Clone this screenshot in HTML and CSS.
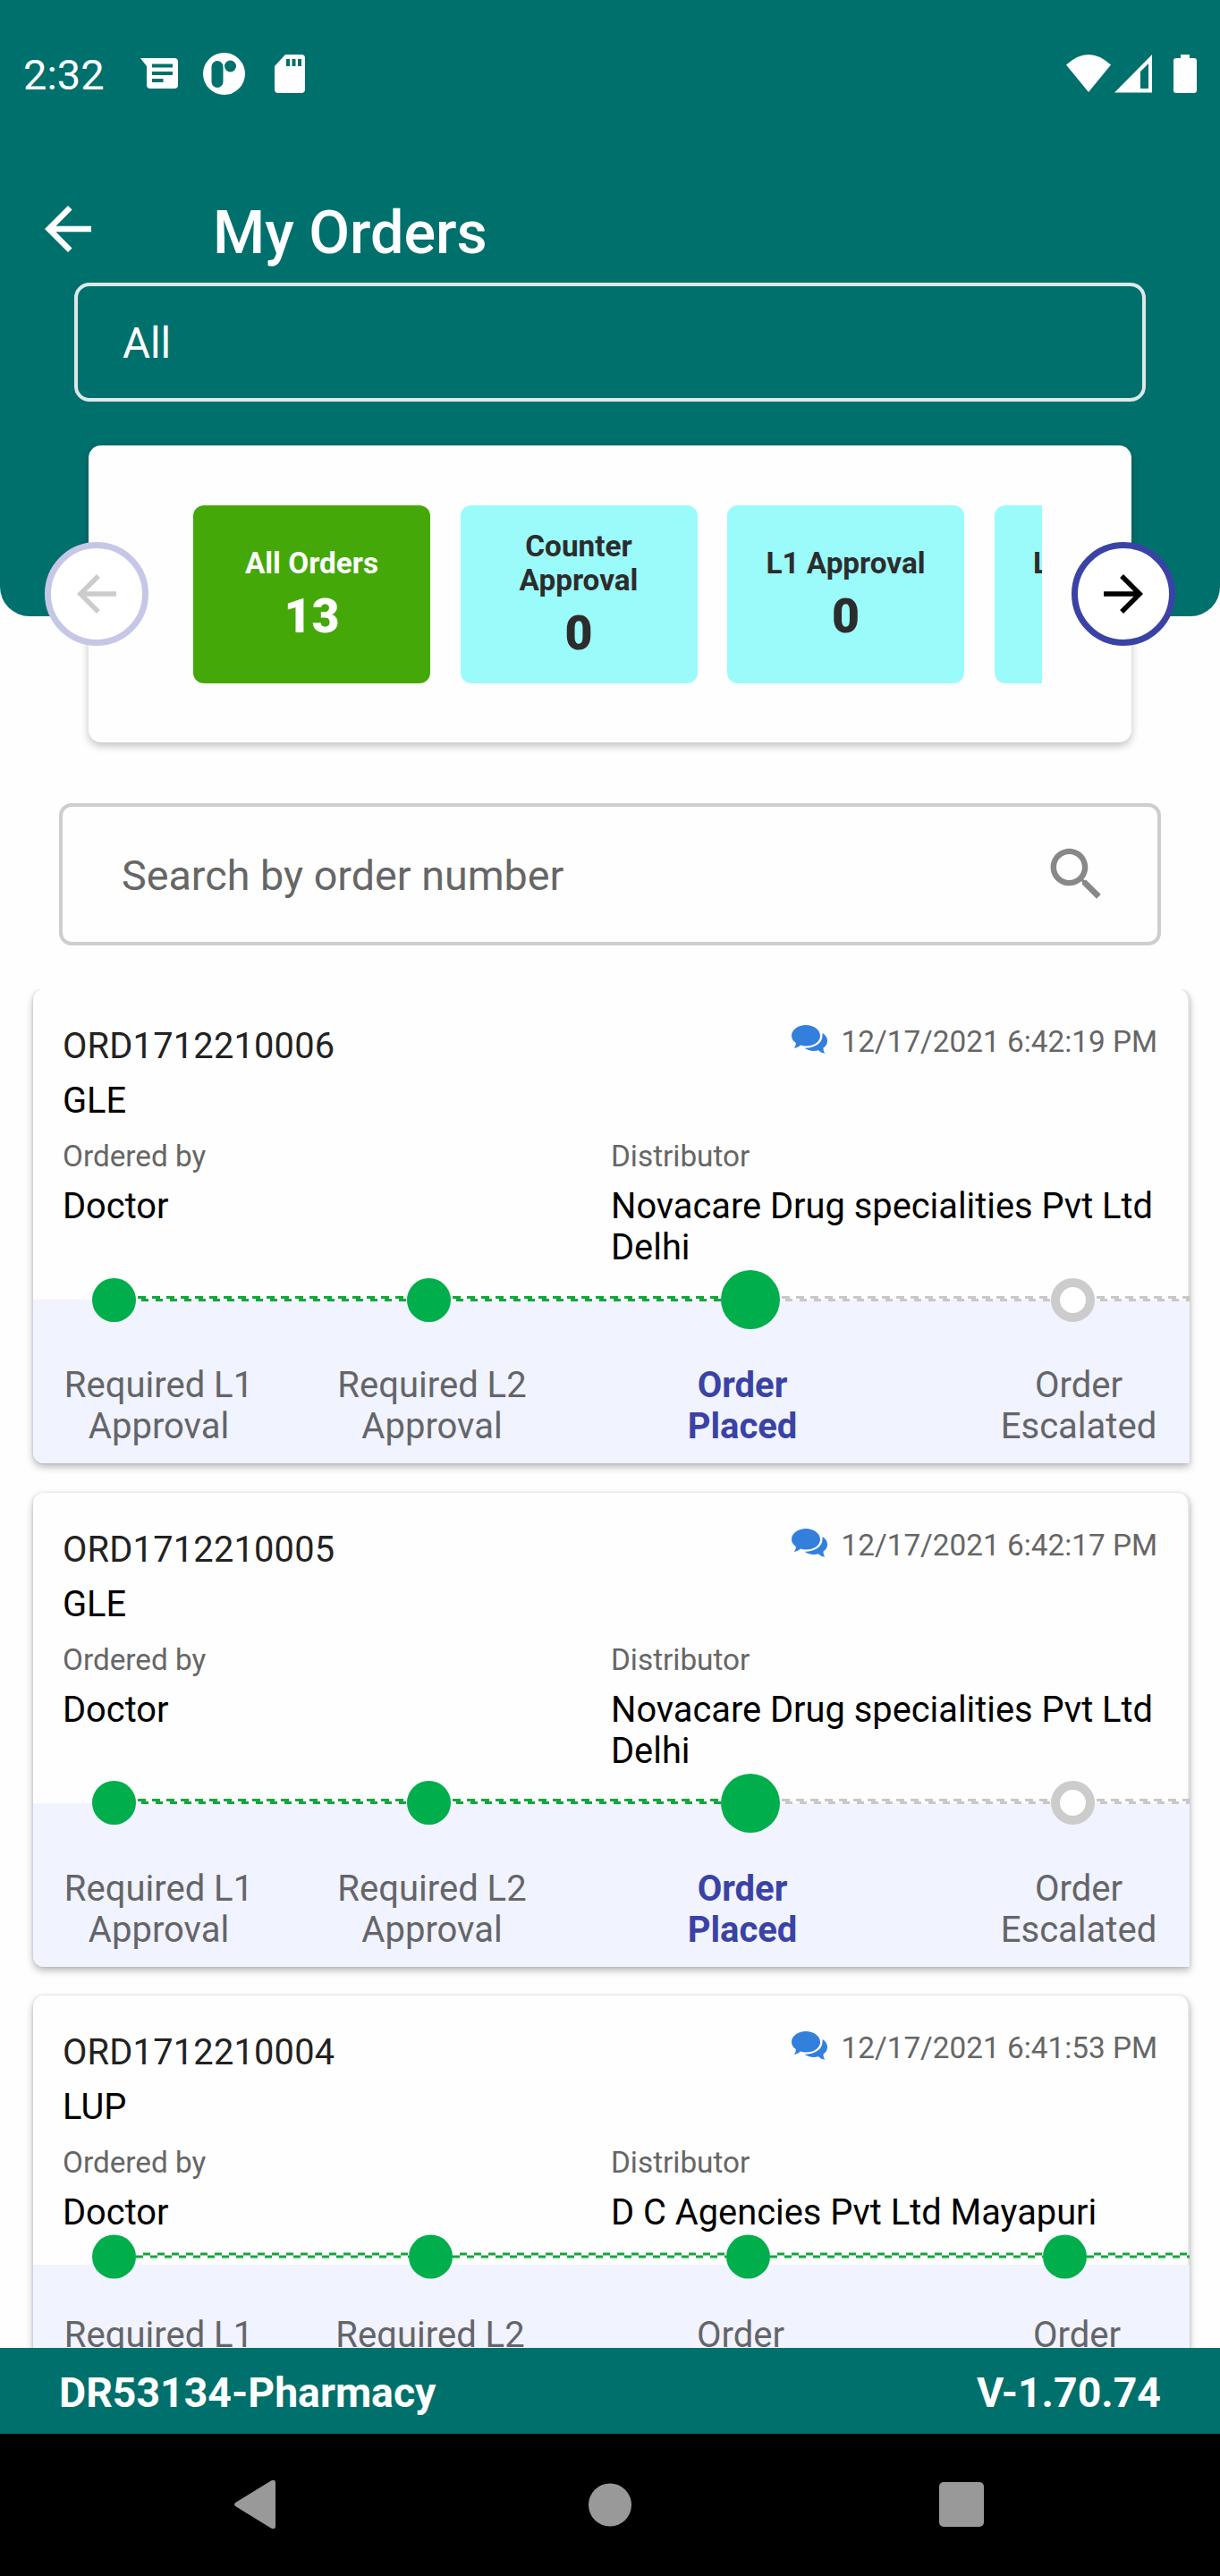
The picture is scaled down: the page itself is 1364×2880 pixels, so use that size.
FILE: index.html
```html
<!DOCTYPE html>
<html lang="en">
  <head>
    <meta charset="UTF-8" />
    <meta name="viewport" content="width=device-width, initial-scale=1.0" />
    <title>My Orders</title>
    <link rel="stylesheet" href="styles.css" />
  </head>
  <body>
    <!-- shared chat icon -->
    <svg class="defs" width="0" height="0">
      <symbol id="chat" viewBox="0 0 40 32">
        <path d="M16 0C24.600 0 32 5 32 12C32 19 24.600 23.500 16 23.500C14 23.500 12 23.200 10 22.500C8 24.500 5.500 25.500 2.800 25.700C4.300 24 5 22 4.800 20C1.700 18 0 15 0 12C0 5 7.400 0 16 0Z" />
        <path d="M34.500 9C38 11 40 14 40 17.500C40 21 38.500 23.500 35.500 25.500C35.500 28 36 30 37.300 31.700C34.500 31.500 32 30.300 30 28.300C24 29.800 18 28.500 14.500 25.700C25 26 34.500 20.500 34.500 12Z" />
      </symbol>
    </svg>

    <div class="app">
      <header class="header">
        <div class="status-bar">
          <span class="time">2:32</span>
          <svg class="icon-message" viewBox="0 0 42 34">
            <path fill-rule="evenodd" d="M0 0H38Q42 0 42 4V30Q42 34 38 34H11Q7 34 7 30V9ZM13 6.500V10.500H36V6.500ZM13 15V19H36V15ZM13 23V27H25.500V23Z" />
          </svg>
          <svg class="icon-app" viewBox="0 0 47 47">
            <circle cx="23.500" cy="23.500" r="23.500" fill="#fff" />
            <rect x="9.500" y="9" width="13" height="30" rx="6.500" fill="#00706c" />
            <circle cx="30.500" cy="15" r="6.500" fill="#00706c" />
          </svg>
          <svg class="icon-sd" viewBox="0 0 34 43">
            <path fill-rule="evenodd" d="M12 0H30Q34 0 34 4V39Q34 43 30 43H4Q0 43 0 39V13ZM13 5V13H17V5ZM19.500 5V13H23.500V5ZM26 5V13H30V5Z" />
          </svg>
          <div class="status-right">
            <svg width="50" height="43" viewBox="0 0 50 43">
              <path d="M25 42L0 11.500Q25 -11.500 50 11.500Z" />
            </svg>
            <svg width="42" height="43" viewBox="0 0 42 43">
              <path fill-rule="evenodd" d="M42 0V42.500H0ZM38 10L29 19V38H38Z" />
            </svg>
            <svg class="icon-battery" width="26" height="43" viewBox="0 0 26 43">
              <path d="M8 0H18V4H23Q26 4 26 7V40Q26 43 23 43H3Q0 43 0 40V7Q0 4 3 4H8Z" />
            </svg>
          </div>
        </div>

        <div class="title-bar">
          <svg class="back" viewBox="0 0 24 24">
            <path d="M20 11H7.830l5.590-5.590L12 4l-8 8 8 8 1.410-1.410L7.830 13H20z" />
          </svg>
          <h1>My Orders</h1>
        </div>

        <div class="select">All</div>
      </header>

      <section class="summary">
        <button class="round prev">
          <svg viewBox="0 0 24 24"><path d="M20 11H7.830l5.590-5.590L12 4l-8 8 8 8 1.410-1.410L7.830 13H20z" /></svg>
        </button>
        <div class="tiles">
          <div class="tile active"><span>All Orders</span><b>13</b></div>
          <div class="tile"><span>Counter Approval</span><b>0</b></div>
          <div class="tile"><span>L1 Approval</span><b>0</b></div>
          <div class="tile"><span>L2 Approval</span><b>0</b></div>
        </div>
        <button class="round next">
          <svg viewBox="0 0 24 24"><path d="M12 4l-1.410 1.410L16.170 11H4v2h12.170l-5.580 5.590L12 20l8-8z" /></svg>
        </button>
      </section>

      <div class="search">
        <span>Search by order number</span>
        <svg viewBox="0 0 24 24"><path d="M15.500 14h-.79l-.28-.27C15.410 12.590 16 11.110 16 9.500 16 5.910 13.090 3 9.500 3S3 5.910 3 9.500 5.910 16 9.500 16c1.610 0 3.090-.59 4.230-1.570l.27.280v.79l5 4.990L20.490 19l-4.990-5zm-6 0C7.010 14 5 11.990 5 9.500S7.010 5 9.500 5 14 7.010 14 9.500 11.990 14 9.500 14z" /></svg>
      </div>

      <main class="orders">
        <article class="order">
          <div class="details">
            <div class="row">
              <p class="number">ORD1712210006</p>
              <p class="date"><svg><use href="#chat" /></svg>12/17/2021 6:42:19 PM</p>
            </div>
            <p class="company">GLE</p>
            <div class="people">
              <div><label>Ordered by</label><p>Doctor</p></div>
              <div><label>Distributor</label><p>Novacare Drug specialities Pvt Ltd Delhi</p></div>
            </div>
          </div>
          <div class="progress">
            <div class="track">
              <i class="dot"></i><i class="line"></i><i class="dot"></i><i class="line"></i><i class="dot current"></i><i class="line pending"></i><i class="dot empty"></i><i class="line pending"></i>
            </div>
            <div class="labels">
              <span>Required L1<br />Approval</span>
              <span>Required L2<br />Approval</span>
              <span class="current">Order<br />Placed</span>
              <span>Order<br />Escalated</span>
            </div>
          </div>
        </article>

        <article class="order">
          <div class="details">
            <div class="row">
              <p class="number">ORD1712210005</p>
              <p class="date"><svg><use href="#chat" /></svg>12/17/2021 6:42:17 PM</p>
            </div>
            <p class="company">GLE</p>
            <div class="people">
              <div><label>Ordered by</label><p>Doctor</p></div>
              <div><label>Distributor</label><p>Novacare Drug specialities Pvt Ltd Delhi</p></div>
            </div>
          </div>
          <div class="progress">
            <div class="track">
              <i class="dot"></i><i class="line"></i><i class="dot"></i><i class="line"></i><i class="dot current"></i><i class="line pending"></i><i class="dot empty"></i><i class="line pending"></i>
            </div>
            <div class="labels">
              <span>Required L1<br />Approval</span>
              <span>Required L2<br />Approval</span>
              <span class="current">Order<br />Placed</span>
              <span>Order<br />Escalated</span>
            </div>
          </div>
        </article>

        <article class="order done">
          <div class="details">
            <div class="row">
              <p class="number">ORD1712210004</p>
              <p class="date"><svg><use href="#chat" /></svg>12/17/2021 6:41:53 PM</p>
            </div>
            <p class="company">LUP</p>
            <div class="people">
              <div><label>Ordered by</label><p>Doctor</p></div>
              <div><label>Distributor</label><p>D C Agencies Pvt Ltd Mayapuri</p></div>
            </div>
          </div>
          <div class="progress">
            <div class="track">
              <i class="dot"></i><i class="line"></i><i class="dot"></i><i class="line"></i><i class="dot"></i><i class="line"></i><i class="dot"></i><i class="line"></i>
            </div>
            <div class="labels">
              <span>Required L1</span>
              <span>Required L2</span>
              <span>Order</span>
              <span>Order</span>
            </div>
          </div>
        </article>
      </main>

      <footer class="footer">
        <span>DR53134-Pharmacy</span>
        <span>V-1.70.74</span>
      </footer>
      <nav class="nav-bar">
        <svg viewBox="0 0 60 60"><path d="M9 27.500L48 3.500Q53 1 53 6V54Q53 59 48 56.500L9 32.500Q5 30 9 27.500Z" /></svg>
        <svg viewBox="0 0 60 60"><circle cx="32" cy="30.500" r="24" /></svg>
        <svg viewBox="0 0 60 60"><rect x="5" y="5" width="50" height="50" rx="5" /></svg>
      </nav>
    </div>
  </body>
</html>
```
FILE: styles.css
```css
* {
  box-sizing: border-box;
}

body {
  margin: 0;
  font-family: Roboto, sans-serif;
  background: #fefefe;
}

p,
h1 {
  margin: 0;
}

.defs {
  display: block;
}

.app {
  height: 2880px;
  display: flex;
  flex-direction: column;
  overflow: hidden;
}

/* header */
.header {
  flex: none;
  height: 689px;
  background: #00706c;
  border-radius: 0 0 33px 33px;
  color: #fff;
}

.status-bar {
  display: flex;
  height: 164px;
  align-items: center;
  padding: 0 26px;
  fill: #fff;
}

.time {
  width: 131px;
  font-size: 47px;
  line-height: 56px;
  padding-top: 3px;
}

.icon-message {
  width: 42px;
  height: 34px;
}

.icon-app {
  width: 47px;
  height: 47px;
  margin: 0 33px 0 28px;
}

.icon-sd {
  width: 34px;
  height: 43px;
}

.status-right {
  display: flex;
  margin-left: auto;
  gap: 4px;
}

.icon-battery {
  margin-left: 20px;
}

.title-bar {
  display: flex;
  align-items: center;
  height: 152px;
  padding: 40px 0 0 37px;
}

.back {
  width: 78px;
  height: 78px;
  margin-top: -8px;
  fill: #fff;
}

h1 {
  margin-left: 123px;
  font-size: 66.5px;
  font-weight: 500;
  line-height: 80px;
}

.select {
  width: 1198px;
  height: 133px;
  margin-left: 83px;
  padding-left: 50px;
  border: 4px solid #dce9e8;
  border-radius: 17px;
  font-size: 47.5px;
  line-height: 128px;
}

/* order counters */
.summary {
  flex: none;
  display: flex;
  align-items: center;
  justify-content: space-between;
  width: 1166px;
  height: 332px;
  margin: -191px 0 0 99px;
  background: #fefefe;
  border-radius: 14px;
  box-shadow: 0 4px 10px rgba(0, 0, 0, 0.24);
}

.round {
  flex: none;
  width: 116px;
  height: 116px;
  padding: 0;
  border: 7px solid #3a43a5;
  border-radius: 50%;
  background: #fff;
  display: flex;
  align-items: center;
  justify-content: center;
}

.round svg {
  flex: none;
  width: 66px;
  height: 66px;
}

.prev {
  margin-left: -49px;
  border-color: #c6c7e6;
  fill: #ccc;
}

.next {
  margin-right: -49px;
}

.tiles {
  display: flex;
  gap: 33.5px;
  width: 949px;
  margin: 0 33px 0 50px;
  overflow: hidden;
}

.tile {
  flex: none;
  display: flex;
  flex-direction: column;
  align-items: center;
  justify-content: center;
  width: 265px;
  height: 199px;
  padding: 0 40px;
  border-radius: 12px;
  background: #9bfafa;
  color: #2c2c2c;
  font-size: 33.3px;
  font-weight: bold;
  line-height: 38px;
  text-align: center;
}

.tile span {
  flex: none;
}

.tile b {
  font-size: 53.5px;
  line-height: 60px;
  padding-top: 10px;
  margin-bottom: -2px;
}

.tile.active {
  background: #44a808;
  color: #fff;
}

/* search */
.search {
  flex: none;
  display: flex;
  align-items: center;
  justify-content: space-between;
  width: 1232px;
  height: 159px;
  margin: 68px 0 49px 66px;
  padding: 0 52px 0 66px;
  border: 4px solid #cecece;
  border-radius: 14px;
  color: #666;
  font-size: 46.7px;
}

.search span {
  padding-top: 2px;
}

.search svg {
  width: 77px;
  height: 77px;
  fill: #888;
}

/* orders */
.orders {
  flex: 1;
  min-height: 0;
  overflow: hidden;
  padding-left: 37px;
}

.order {
  width: 1293px;
  height: 530px;
  margin-bottom: 32.5px;
  border-radius: 12px 12px 0 12px;
  box-shadow: 0 4px 8px rgba(0, 0, 0, 0.28), 0 0 3px rgba(0, 0, 0, 0.14);
}

.details {
  padding: 41px 36px 35px 33px;
  background: #fefefe;
  border-right: 2px solid #e6e6e6;
  border-radius: 12px 12px 0 0;
  font-size: 39.8px;
  line-height: 46px;
  color: #000;
}

.row {
  display: flex;
  justify-content: space-between;
}

.number {
  color: #222;
  letter-spacing: 0.2px;
}

.date {
  display: flex;
  height: 38px;
  margin-right: -2px;
  font-size: 33.3px;
  line-height: 36px;
  color: #666;
}

.date svg {
  width: 40px;
  height: 32px;
  margin: -1px 16px 0 0;
  fill: #337fdc;
}

.company {
  margin: 15px 0 20px;
}

.people {
  display: grid;
  grid-template-columns: 613px 1fr;
  margin-right: -2px;
}

.people label {
  display: block;
  margin-bottom: 14px;
  font-size: 33.3px;
  line-height: 38px;
  color: #666;
}

.progress {
  height: 183px;
  background: #f1f3ff;
  border-radius: 0 0 0 12px;
}

.track {
  display: flex;
  align-items: center;
  height: 66px;
  padding-left: 66px;
  transform: translateY(-33px);
}

.dot {
  flex: none;
  width: 49px;
  height: 49px;
  border-radius: 50%;
  background: #00ae4b;
}

.dot.current {
  width: 66px;
  height: 66px;
}

.dot.empty {
  border: 10px solid #ccc;
  background: #fff;
}

.line {
  --color: #14a63c;
  flex: none;
  width: 302.5px;
  height: 6px;
  margin-top: -3px;
  background:
    repeating-linear-gradient(90deg, var(--color) 0 9px, transparent 9px 16px) 2px 0 / 100% 3px no-repeat,
    repeating-linear-gradient(90deg, transparent 0 4px, var(--color) 4px 12px, transparent 12px 16px) 2px 3px / 100% 3px no-repeat;
}

.line.pending {
  --color: #c8c8c8;
}

.line:last-child {
  flex: 1;
}

.labels {
  display: grid;
  grid-template-columns: 281px 330px 364px 318px;
  margin-top: 7px;
  font-size: 40px;
  line-height: 46px;
  text-align: center;
  color: #646569;
}

.labels span:last-child {
  padding-left: 70px;
}

.labels .current {
  color: #3a43a5;
  font-weight: bold;
}

/* finished order: the track sits above the panel */
.done .track {
  transform: translateY(-42.5px);
}

.done .line {
  width: 305.3px;
  height: 6px;
  background:
    repeating-linear-gradient(90deg, transparent 0 8px, var(--color) 8px 16px) 0 0 / 100% 3px no-repeat,
    repeating-linear-gradient(90deg, var(--color) 0 8px, transparent 8px 16px) 0 3px / 100% 3px no-repeat;
}

.done .labels {
  margin-top: -10px;
}

.done .labels span:not(:first-child) {
  padding-right: 4px;
}

/* footer */
.footer {
  flex: none;
  display: flex;
  justify-content: space-between;
  height: 96px;
  padding: 0 66px;
  background: #00706c;
  color: #fff;
  font-size: 46.4px;
  font-weight: bold;
  line-height: 101px;
}

.nav-bar {
  flex: none;
  display: flex;
  justify-content: space-between;
  height: 159px;
  padding: 49px 259px 0 255px;
  background: #000;
}

.nav-bar svg {
  width: 60px;
  height: 60px;
  fill: #999;
}
```
